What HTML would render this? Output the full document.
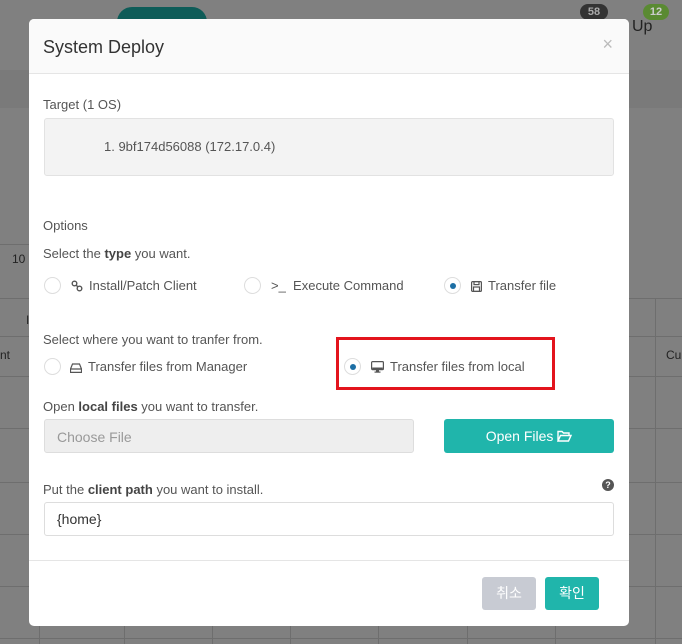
<!DOCTYPE html>
<html><head><meta charset="utf-8"><style>
*{box-sizing:border-box;margin:0;padding:0}
body{width:682px;height:644px;overflow:hidden;background:#808080;font-family:"Liberation Sans","Noto Sans CJK KR",sans-serif;font-size:13px;color:#555;position:relative}
.abs{position:absolute}
.modal{position:absolute;left:29px;top:19px;width:600px;height:607px;background:#fff;border-radius:5px;overflow:hidden}
.hdr{height:55px;background:#fafafa;border-bottom:1px solid #e5e5e5;position:relative}
.hdr h1{font-weight:normal;font-size:18px;color:#333;position:absolute;left:14px;top:18px}
.x{position:absolute;right:16px;top:15px;color:#bbb;font-size:18px}
.lbl{position:absolute;left:14px;font-size:13px;color:#555}
b{font-weight:bold;color:#444}
.radio{position:absolute;width:17px;height:17px;border:1px solid #ddd;border-radius:50%;background:#fff}
.radio.on::after{content:"";position:absolute;left:5px;top:5px;width:6px;height:6px;border-radius:50%;background:#1d6fa5}
.opt{position:absolute;font-size:13px;color:#555;white-space:nowrap}
.opt svg{vertical-align:-2px;margin-right:6px}
.line{position:absolute;background:#6e6e6e}
</style></head><body>
<div class="abs" style="left:0;top:70px;width:682px;height:38px;background:#7a7a7a"></div>
<div class="abs" style="left:117px;top:7px;width:90px;height:30px;border-radius:15px;background:#0e5c58"></div>
<div class="abs" style="left:580px;top:4px;width:28px;height:16px;border-radius:8px;background:#333;color:#aaa;font-size:11px;text-align:center;line-height:16px;font-weight:bold">58</div>
<div class="abs" style="left:643px;top:4px;width:26px;height:16px;border-radius:8px;background:#5a8a32;color:#ccc;font-size:11px;text-align:center;line-height:16px;font-weight:bold">12</div>
<div class="abs" style="left:632px;top:18px;font-size:16px;color:#222">Up</div>
<div class="abs" style="left:12px;top:252px;font-size:12px;color:#222">10</div>
<div class="abs" style="left:26px;top:313px;font-size:12px;color:#222">I</div>
<div class="abs" style="left:0;top:348px;font-size:12px;color:#222">nt</div>
<div class="abs" style="left:666px;top:348px;font-size:12px;color:#222">Cu</div>
<div class="line" style="left:0;top:244px;width:30px;height:1px"></div>
<div class="line" style="left:0;top:298px;width:682px;height:1px"></div>
<div class="line" style="left:0;top:336px;width:682px;height:1px"></div>
<div class="line" style="left:0;top:376px;width:682px;height:1px"></div>
<div class="line" style="left:0;top:428px;width:682px;height:1px"></div>
<div class="line" style="left:0;top:482px;width:682px;height:1px"></div>
<div class="line" style="left:0;top:534px;width:682px;height:1px"></div>
<div class="line" style="left:0;top:586px;width:682px;height:1px"></div>
<div class="line" style="left:0;top:638px;width:682px;height:1px"></div>
<div class="line" style="left:655px;top:298px;width:1px;height:346px"></div>
<div class="line" style="left:39px;top:626px;width:1px;height:18px"></div>
<div class="line" style="left:124px;top:626px;width:1px;height:18px"></div>
<div class="line" style="left:212px;top:626px;width:1px;height:18px"></div>
<div class="line" style="left:290px;top:626px;width:1px;height:18px"></div>
<div class="line" style="left:378px;top:626px;width:1px;height:18px"></div>
<div class="line" style="left:467px;top:626px;width:1px;height:18px"></div>
<div class="line" style="left:555px;top:626px;width:1px;height:18px"></div>

<div class="modal">
 <div class="hdr"><h1>System Deploy</h1><span class="x">×</span></div>
 <div class="lbl" style="top:78px">Target (1 OS)</div>
 <div class="abs" style="left:15px;top:99px;width:570px;height:58px;background:#f3f3f3;border:1px solid #e2e2e2;border-radius:3px"></div>
 <div class="abs" style="left:75px;top:120px;font-size:13px;color:#555">1. 9bf174d56088 (172.17.0.4)</div>
 <div class="lbl" style="top:199px">Options</div>
 <div class="lbl" style="top:227px">Select the <b>type</b> you want.</div>
 <div class="radio" style="left:15px;top:258px"></div>
 <div class="opt" style="left:42px;top:259px"><svg width="12" height="12" viewBox="0 0 12 12" fill="none" stroke="#555" stroke-width="1.4"><circle cx="3.5" cy="3.5" r="2.3"/><circle cx="8.5" cy="8.5" r="2.3"/><path d="M5 5l2 2"/></svg>Install/Patch Client</div>
 <div class="radio" style="left:215px;top:258px"></div>
 <div class="opt" style="left:242px;top:259px">&gt;_&nbsp;&nbsp;Execute Command</div>
 <div class="radio on" style="left:415px;top:258px"></div>
 <div class="opt" style="left:442px;top:259px"><svg width="11" height="11" viewBox="0 0 11 11" fill="none" stroke="#555" stroke-width="1.2"><rect x="0.6" y="0.6" width="9.8" height="9.8" rx="1"/><rect x="3" y="0.6" width="5" height="3"/><rect x="2.5" y="6" width="6" height="4.4"/></svg>Transfer file</div>
 <div class="lbl" style="top:313px">Select where you want to tranfer from.</div>
 <div class="radio" style="left:15px;top:339px"></div>
 <div class="opt" style="left:41px;top:340px"><svg width="12" height="10" viewBox="0 0 12 10" fill="none" stroke="#555" stroke-width="1.2"><path d="M2.5 1h7l2 5v3.4H0.5V6z M0.5 6h11"/></svg>Transfer files from Manager</div>
 <div class="abs" style="left:307px;top:318px;width:219px;height:53px;border:3px solid #e3141d"></div>
 <div class="radio on" style="left:315px;top:339px"></div>
 <div class="opt" style="left:342px;top:340px"><svg width="13" height="12" viewBox="0 0 13 12"><rect x="0.6" y="0.6" width="11.8" height="8" rx="1" fill="none" stroke="#555" stroke-width="1.2"/><rect x="1.2" y="6.5" width="10.6" height="1.6" fill="#555"/><rect x="5" y="9" width="3" height="2" fill="#555"/><rect x="3.5" y="10.5" width="6" height="1.2" fill="#555"/></svg>Transfer files from local</div>
 <div class="lbl" style="top:380px">Open <b>local files</b> you want to transfer.</div>
 <div class="abs" style="left:15px;top:400px;width:370px;height:34px;background:#eee;border:1px solid #ddd;border-radius:3px;padding:9px 12px;color:#999;font-size:14px">Choose File</div>
 <div class="abs" style="left:415px;top:400px;width:170px;height:34px;background:#20b5ab;border-radius:3px;color:#fff;text-align:center;line-height:34px;font-size:14px">Open Files <svg width="15" height="12" viewBox="0 0 15 12" fill="none" stroke="#fff" stroke-width="1.4" style="vertical-align:-1px"><path d="M1 11V1.5h4l1.5 1.5H12v2.5 M1 11l2.5-5.5H14L11.5 11z"/></svg></div>
 <div class="lbl" style="top:463px">Put the <b>client path</b> you want to install.</div>
 <div class="abs" style="left:573px;top:460px;width:12px;height:12px;border-radius:50%;background:#555;color:#fff;font-size:9px;text-align:center;line-height:12px;font-weight:bold">?</div>
 <div class="abs" style="left:15px;top:483px;width:570px;height:34px;border:1px solid #ddd;border-radius:3px;padding:8px 12px;color:#333;font-size:14px">{home}</div>
 <div class="abs" style="left:0;top:541px;width:600px;height:1px;background:#e5e5e5"></div>
 <div class="abs" style="left:453px;top:558px;width:54px;height:33px;background:#c8cbd3;border-radius:3px;color:#fff;text-align:center;line-height:33px;font-size:14px">취소</div>
 <div class="abs" style="left:516px;top:558px;width:54px;height:33px;background:#20b5ab;border-radius:3px;color:#fff;text-align:center;line-height:33px;font-size:14px">확인</div>
</div>
</body></html>
